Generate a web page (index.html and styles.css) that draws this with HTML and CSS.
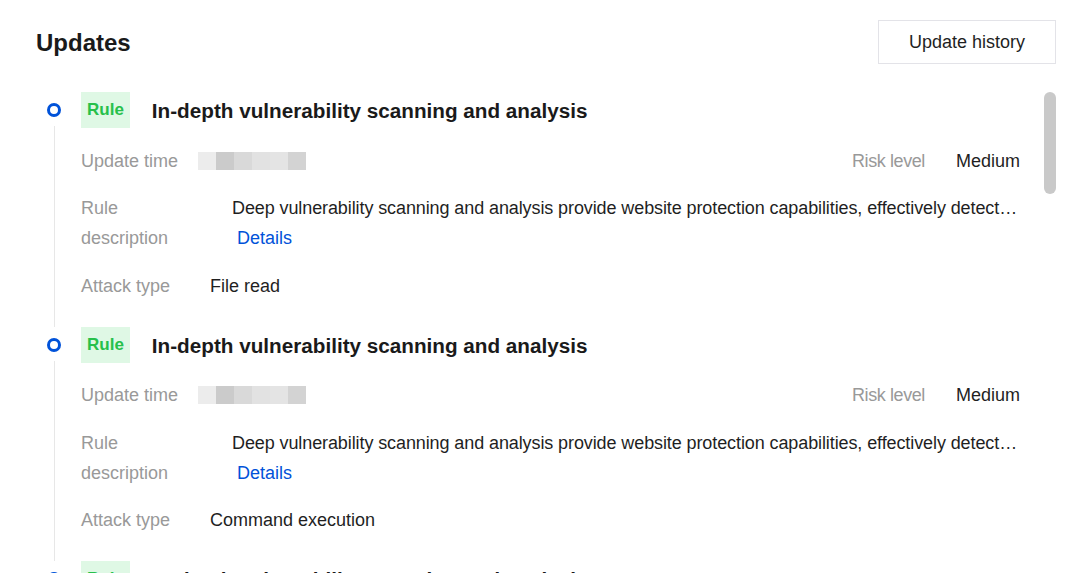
FILE: index.html
```html
<!DOCTYPE html>
<html lang="en">
<head>
<meta charset="utf-8">
<title>Updates</title>
<link rel="stylesheet" href="styles.css">
</head>
<body>
<main class="page">
  <header class="head">
    <h1 class="head-title">Updates</h1>
    <button class="btn" type="button">Update history</button>
  </header>
  <div class="list-wrap">
    <div class="list">
      <ul class="timeline">
        <li class="item">
          <div class="axis"><span class="dot"></span><span class="line"></span></div>
          <div class="body">
            <div class="item-head"><span class="tag">Rule</span><h2 class="item-title">In-depth vulnerability scanning and analysis</h2></div>
            <div class="row">
              <span class="label label-time">Update time</span>
              <span class="mask"><i class="m1"></i><i class="m2"></i><i class="m3"></i><i class="m4"></i><i class="m5"></i><i class="m6"></i></span>
              <span class="risk"><span class="label">Risk level</span><span class="value">Medium</span></span>
            </div>
            <div class="row">
              <span class="label label-desc">Rule description</span>
              <div class="desc">
                <p class="desc-text">Deep vulnerability scanning and analysis provide website protection capabilities, effectively detect vulnerabilities and block attacks that exploit them.</p>
                <a class="link" href="#">Details</a>
              </div>
            </div>
            <div class="row">
              <span class="label label-attack">Attack type</span>
              <span class="value">File read</span>
            </div>
          </div>
        </li>
        <li class="item">
          <div class="axis"><span class="dot"></span><span class="line"></span></div>
          <div class="body">
            <div class="item-head"><span class="tag">Rule</span><h2 class="item-title">In-depth vulnerability scanning and analysis</h2></div>
            <div class="row">
              <span class="label label-time">Update time</span>
              <span class="mask"><i class="m1"></i><i class="m2"></i><i class="m3"></i><i class="m4"></i><i class="m5"></i><i class="m6"></i></span>
              <span class="risk"><span class="label">Risk level</span><span class="value">Medium</span></span>
            </div>
            <div class="row">
              <span class="label label-desc">Rule description</span>
              <div class="desc">
                <p class="desc-text">Deep vulnerability scanning and analysis provide website protection capabilities, effectively detect vulnerabilities and block attacks that exploit them.</p>
                <a class="link" href="#">Details</a>
              </div>
            </div>
            <div class="row">
              <span class="label label-attack">Attack type</span>
              <span class="value">Command execution</span>
            </div>
          </div>
        </li>
        <li class="item">
          <div class="axis"><span class="dot"></span><span class="line"></span></div>
          <div class="body">
            <div class="item-head"><span class="tag">Rule</span><h2 class="item-title">In-depth vulnerability scanning and analysis</h2></div>
            <div class="row">
              <span class="label label-time">Update time</span>
              <span class="mask"><i class="m1"></i><i class="m2"></i><i class="m3"></i><i class="m4"></i><i class="m5"></i><i class="m6"></i></span>
              <span class="risk"><span class="label">Risk level</span><span class="value">High</span></span>
            </div>
            <div class="row">
              <span class="label label-desc">Rule description</span>
              <div class="desc">
                <p class="desc-text">Deep vulnerability scanning and analysis provide website protection capabilities, effectively detect vulnerabilities and block attacks that exploit them.</p>
                <a class="link" href="#">Details</a>
              </div>
            </div>
            <div class="row">
              <span class="label label-attack">Attack type</span>
              <span class="value">SQL injection</span>
            </div>
          </div>
        </li>
        <li class="item">
          <div class="axis"><span class="dot"></span><span class="line"></span></div>
          <div class="body">
            <div class="item-head"><span class="tag">Rule</span><h2 class="item-title">In-depth vulnerability scanning and analysis</h2></div>
            <div class="row">
              <span class="label label-time">Update time</span>
              <span class="mask"><i class="m1"></i><i class="m2"></i><i class="m3"></i><i class="m4"></i><i class="m5"></i><i class="m6"></i></span>
              <span class="risk"><span class="label">Risk level</span><span class="value">Medium</span></span>
            </div>
            <div class="row">
              <span class="label label-desc">Rule description</span>
              <div class="desc">
                <p class="desc-text">Deep vulnerability scanning and analysis provide website protection capabilities, effectively detect vulnerabilities and block attacks that exploit them.</p>
                <a class="link" href="#">Details</a>
              </div>
            </div>
            <div class="row">
              <span class="label label-attack">Attack type</span>
              <span class="value">Cross-site scripting</span>
            </div>
          </div>
        </li>
      </ul>
    </div>
    <div class="thumb"></div>
  </div>
</main>
</body>
</html>
```

FILE: styles.css
```css
* { box-sizing: border-box; }

html, body {
  margin: 0;
  height: 573px;
  overflow: hidden;
  background: #ffffff;
  font-family: "Liberation Sans", Arial, sans-serif;
  color: #1f1f1f;
}

.page {
  padding: 20px 32px 0 36px;
  height: 573px;
  display: flex;
  flex-direction: column;
}

.head {
  display: flex;
  justify-content: space-between;
  align-items: center;
  height: 44px;
  flex: none;
}

.head-title {
  margin: 0;
  font-size: 24px;
  font-weight: 700;
  color: #1a1a1a;
  position: relative;
  top: 1px;
}

.btn {
  width: 178px;
  height: 44px;
  border: 1px solid #e3e3e8;
  background: #ffffff;
  font-family: inherit;
  font-size: 18px;
  color: #1f1f1f;
  padding: 0;
  cursor: pointer;
}

.list-wrap {
  position: relative;
  margin-top: 28px;
  flex: 1;
  min-height: 0;
}

.list {
  height: 100%;
  overflow-y: auto;
  scrollbar-width: none;
  padding-right: 36px;
}

.list::-webkit-scrollbar { display: none; }

.thumb {
  position: absolute;
  right: 0;
  top: 0;
  width: 12px;
  height: 102px;
  border-radius: 6px;
  background: #c9c9c9;
}

.timeline {
  list-style: none;
  margin: 0;
  padding: 0;
}

.item {
  display: flex;
  padding-bottom: 26px;
}

.axis {
  width: 45px;
  flex: none;
  position: relative;
}

.dot {
  position: absolute;
  left: 11px;
  top: 11px;
  width: 14px;
  height: 14px;
  border: 3px solid #0052d9;
  border-radius: 50%;
}

.line {
  position: absolute;
  left: 18px;
  top: 34px;
  bottom: -26px;
  width: 1px;
  background: #e7e7e7;
}

.body {
  flex: 1;
  min-width: 0;
  display: flex;
  flex-direction: column;
  gap: 17.5px;
}

.item-head {
  display: flex;
  align-items: center;
  height: 36px;
}

.tag {
  height: 36px;
  line-height: 36px;
  padding: 0 6px;
  background: #dff8e5;
  color: #27c04b;
  font-size: 17px;
  font-weight: 700;
}

.item-title {
  margin: 0 0 0 22px;
  font-size: 20.7px;
  font-weight: 700;
  color: #1a1a1a;
  white-space: nowrap;
  position: relative;
  top: 1px;
}

.row {
  display: flex;
  align-items: flex-start;
  font-size: 18px;
  line-height: 30px;
}

.label {
  color: #999999;
  flex: none;
}

.label-time { width: 117px; }
.label-desc { width: 120px; margin-right: 31px; }
.label-attack { width: 129px; }

.value { color: #1f1f1f; }

.mask {
  display: flex;
  height: 30px;
  align-items: center;
}

.mask i {
  display: block;
  width: 18px;
  height: 18px;
}

.m1 { background: #ececec; }
.m2 { background: #cbcbcb; }
.m3 { background: #d9d9d9; }
.m4 { background: #e2e2e2; }
.m5 { background: #e4e4e4; }
.m6 { background: #d3d3d3; }

.risk {
  margin-left: auto;
  display: flex;
  gap: 31px;
}

.risk .label { letter-spacing: -0.4px; }

.desc {
  flex: 1;
  min-width: 0;
  display: flex;
  flex-direction: column;
  align-items: flex-start;
}

.desc-text {
  margin: 0;
  width: 100%;
  white-space: nowrap;
  overflow: hidden;
  text-overflow: ellipsis;
  color: #1f1f1f;
  letter-spacing: -0.1px;
}

.link {
  padding-left: 5px;
  color: #0052d9;
  text-decoration: none;
}
```
